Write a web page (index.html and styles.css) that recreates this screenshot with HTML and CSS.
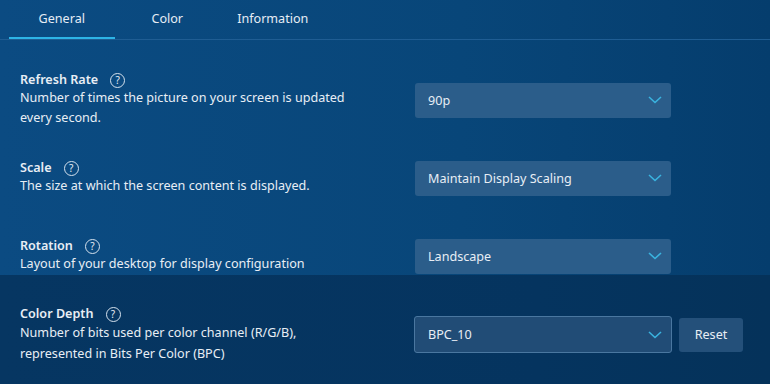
FILE: index.html
```html
<!DOCTYPE html>
<html lang="en">
<head>
    <meta charset="UTF-8">
    <title>Display Settings</title>
    <link rel="stylesheet" href="styles.css">
</head>
<body>
    <div class="panel">
        <!-- Tabs -->
        <div class="tabs">
            <div class="tab active">General</div>
            <div class="tab">Color</div>
            <div class="tab">Information</div>
        </div>

        <div class="settings">
            <div class="row">
                <div class="info">
                    <div class="label">Refresh Rate <span class="help">?</span></div>
                    <div class="desc">Number of times the picture on your screen is updated<br>every second.</div>
                </div>
                <div class="control">
                    <div class="select">
                        <span>90p</span>
                        <svg class="chevron" viewBox="0 0 14 8"><path d="M1 1l6 5.5L13 1"/></svg>
                    </div>
                </div>
            </div>

            <div class="row">
                <div class="info">
                    <div class="label">Scale <span class="help">?</span></div>
                    <div class="desc">The size at which the screen content is displayed.</div>
                </div>
                <div class="control">
                    <div class="select">
                        <span>Maintain Display Scaling</span>
                        <svg class="chevron" viewBox="0 0 14 8"><path d="M1 1l6 5.5L13 1"/></svg>
                    </div>
                </div>
            </div>

            <div class="row">
                <div class="info">
                    <div class="label">Rotation <span class="help">?</span></div>
                    <div class="desc">Layout of your desktop for display configuration</div>
                </div>
                <div class="control">
                    <div class="select">
                        <span>Landscape</span>
                        <svg class="chevron" viewBox="0 0 14 8"><path d="M1 1l6 5.5L13 1"/></svg>
                    </div>
                </div>
            </div>
        </div>

        <!-- Highlighted (changed) setting -->
        <div class="settings changed">
            <div class="row">
                <div class="info">
                    <div class="label">Color Depth <span class="help">?</span></div>
                    <div class="desc">Number of bits used per color channel (R/G/B),<br>represented in Bits Per Color (BPC)</div>
                </div>
                <div class="control">
                    <div class="select outlined">
                        <span>BPC_10</span>
                        <svg class="chevron" viewBox="0 0 14 8"><path d="M1 1l6 5.5L13 1"/></svg>
                    </div>
                    <button class="reset">Reset</button>
                </div>
            </div>
        </div>
    </div>
</body>
</html>
```

FILE: styles.css
```css
* {
    margin: 0;
    padding: 0;
    box-sizing: border-box;
    font-family: 'Noto Sans', sans-serif;
}

body {
    width: 770px;
    height: 384px;
    overflow: hidden;
    color: #e8eef5;
    font-size: 12.6px;
    background: linear-gradient(90deg, #0b4b82 0%, #084679 60%, #053d6d 100%);
}

/* Tabs */
.tabs {
    display: flex;
    height: 40px;
    padding-left: 9px;
    border-bottom: 1px solid #1f5d93;
}

.tab {
    width: 105.5px;
    text-align: center;
    line-height: 38px;
    color: #e6edf5;
}

.tab.active {
    border-bottom: 2px solid #2db4e6;
}

/* Setting rows */
.settings {
    height: 235px;
    padding-top: 21px;
}

.row {
    display: flex;
    align-items: center;
    height: 78px;
    padding-left: 20px;
}

.info {
    width: 395px;
}

.label {
    font-weight: 600;
    line-height: 16px;
    display: flex;
    align-items: center;
}

.help {
    display: inline-flex;
    justify-content: center;
    align-items: center;
    width: 15px;
    height: 15px;
    margin-left: 12px;
    border: 1.3px solid #d6e2ee;
    border-radius: 50%;
    font-size: 10px;
    font-weight: 400;
    line-height: 1;
}

.desc {
    line-height: 20px;
}

.control {
    display: flex;
    align-items: center;
    gap: 7px;
}

.select {
    width: 256px;
    height: 35px;
    display: flex;
    align-items: center;
    justify-content: space-between;
    padding: 0 9px 0 13px;
    background: #2b5d8a;
    border-radius: 3px;
}

.chevron {
    width: 14px;
    height: 8px;
    fill: none;
    stroke: #3ab3df;
    stroke-width: 1.6;
}

/* Changed setting block */
.settings.changed {
    height: 109px;
    padding-top: 31px;
    background: linear-gradient(90deg, #063662 0%, #05345f 70%, #05325a 100%);
}

.settings.changed .row {
    height: auto;
    align-items: flex-start;
}

.settings.changed .desc {
    line-height: 21px;
}

.settings.changed .control {
    margin-top: 10px;
}

.select.outlined {
    width: 258px;
    height: 37px;
    margin-left: -1px;
    background: #214c76;
    border: 1px solid #4a77a0;
}

.reset {
    width: 64px;
    height: 34px;
    border: none;
    border-radius: 3px;
    background: #24507a;
    color: #e8eef5;
    font-family: 'Noto Sans', sans-serif;
    font-size: 12.6px;
}
```
